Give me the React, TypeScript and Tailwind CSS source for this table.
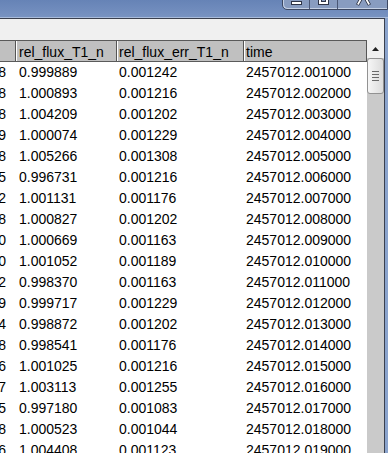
const rows: [string, string, string, string][] = [
  ["8", "0.999889", "0.001242", "2457012.001000"],
  ["8", "1.000893", "0.001216", "2457012.002000"],
  ["8", "1.004209", "0.001202", "2457012.003000"],
  ["9", "1.000074", "0.001229", "2457012.004000"],
  ["8", "1.005266", "0.001308", "2457012.005000"],
  ["5", "0.996731", "0.001216", "2457012.006000"],
  ["2", "1.001131", "0.001176", "2457012.007000"],
  ["8", "1.000827", "0.001202", "2457012.008000"],
  ["0", "1.000669", "0.001163", "2457012.009000"],
  ["0", "1.001052", "0.001189", "2457012.010000"],
  ["2", "0.998370", "0.001163", "2457012.011000"],
  ["9", "0.999717", "0.001229", "2457012.012000"],
  ["4", "0.998872", "0.001202", "2457012.013000"],
  ["8", "0.998541", "0.001176", "2457012.014000"],
  ["6", "1.001025", "0.001216", "2457012.015000"],
  ["7", "1.003113", "0.001255", "2457012.016000"],
  ["5", "0.997180", "0.001083", "2457012.017000"],
  ["8", "1.000523", "0.001044", "2457012.018000"],
  ["6", "1.004408", "0.001123", "2457012.019000"],
];

function CaptionButtons() {
  return (
    <div className="flex h-[11px] w-[106px] -mt-px rounded-bl-[5px] border border-[#3d4862] bg-[#889cc0] shadow-[inset_1px_-1px_0_#c4d0e4]">
      {/* minimize */}
      <div className="flex w-[27px] justify-center border-r border-[#4a5775] pl-px">
        <div className="mt-[1px] h-[4px] w-[11px] border border-[#2e3446] bg-white" />
      </div>
      {/* maximize */}
      <div className="flex w-[28px] justify-center border-r border-[#4a5775]">
        <div className="h-[5px] w-[11px] border-x border-b border-[#2e3446] bg-white px-[2px] pb-[2px]">
          <div className="h-full w-full border-x border-b border-[#2e3446] bg-[#889cc0]" />
        </div>
      </div>
      {/* close */}
      <div className="flex flex-1 pl-[18px]">
        <svg width="15" height="6" viewBox="0 0 15 6">
          <path d="M5.5 -2 L1.5 5 M9.5 -2 L13.5 5" stroke="#2e3446" strokeWidth="3.4" />
          <path d="M5.5 -2 L1.8 4.5 M9.5 -2 L13.2 4.5" stroke="#fff" strokeWidth="1.7" />
        </svg>
      </div>
    </div>
  );
}

function Scrollbar() {
  return (
    <div className="flex w-[17px] shrink-0 flex-col bg-[#cacaca]">
      <div className="flex h-[18px] items-center justify-center bg-[#f0f0f0]">
        <svg width="7" height="4" viewBox="0 0 7 4">
          <path d="M3.5 0 L7 4 L0 4 Z" fill="#202020" />
        </svg>
      </div>
      <div className="flex h-[36px] flex-col items-center justify-center gap-[2px] rounded-[3px] border border-[#929292] bg-gradient-to-r from-[#f6f6f6] to-[#dcdcdc]">
        <div className="h-px w-[7px] bg-[#6a6a6a]" />
        <div className="h-px w-[7px] bg-[#6a6a6a]" />
        <div className="h-px w-[7px] bg-[#6a6a6a]" />
        <div className="h-px w-[7px] bg-[#6a6a6a]" />
      </div>
      <div className="flex-1" />
      <div className="flex h-[14px] items-end justify-center bg-[#f0f0f0] pb-[1px]">
        <svg width="7" height="4" viewBox="0 0 7 4">
          <path d="M0 0 L7 0 L3.5 4 Z" fill="#202020" />
        </svg>
      </div>
    </div>
  );
}

export default function App() {
  return (
    <div className="h-[453px] w-[388px] overflow-hidden bg-[#8aa3cc] font-['Liberation_Sans',Arial,sans-serif] text-[14px] text-black">
      {/* title bar */}
      <div className="flex h-[18px] justify-end bg-gradient-to-b from-[#6683b6] via-[#6f8bbc] to-[#7994c2] shadow-[inset_0_-1px_0_#a9bcdb]">
        <CaptionButtons />
      </div>

      <div className="flex">
        <div className="flex w-[385px] flex-col border-t border-r border-[#3a404e] bg-[#f0f0f0]">
          {/* empty pane above table */}
          <div className="h-[21px]" />

          <div className="flex h-[500px] bg-white">
            <div className="flex w-[367px] flex-col">
              {/* header */}
              <div className="flex h-[22px] border-y border-[#5a5a5a] bg-[#c0c0c0] leading-[20px]">
                <div className="w-[16px] border-r border-[#555]" />
                <div className="w-[101px] border-l border-r border-l-white border-r-[#555] pl-[2px] pt-px">rel_flux_T1_n</div>
                <div className="w-[127px] border-l border-r border-l-white border-r-[#555] pl-[1px] pt-px">rel_flux_err_T1_n</div>
                <div className="flex-1 border-l border-r border-l-white border-r-[#555] pl-[1px] pt-px">time</div>
              </div>
              {/* body */}
              {rows.map((r, i) => (
                <div key={i} className="flex h-[21px] shrink-0 leading-[21px]">
                  <div className="flex w-[16px] justify-end overflow-hidden pr-[10px]">
                    <span className="shrink-0 whitespace-nowrap">{"0.00" + r[0]}</span>
                  </div>
                  <div className="w-[101px] pl-[3px]">{r[1]}</div>
                  <div className="w-[127px] pl-[2px]">{r[2]}</div>
                  <div className="flex-1 pl-[2px]">{r[3]}</div>
                </div>
              ))}
            </div>
            <Scrollbar />
          </div>
        </div>
      </div>
    </div>
  );
}
